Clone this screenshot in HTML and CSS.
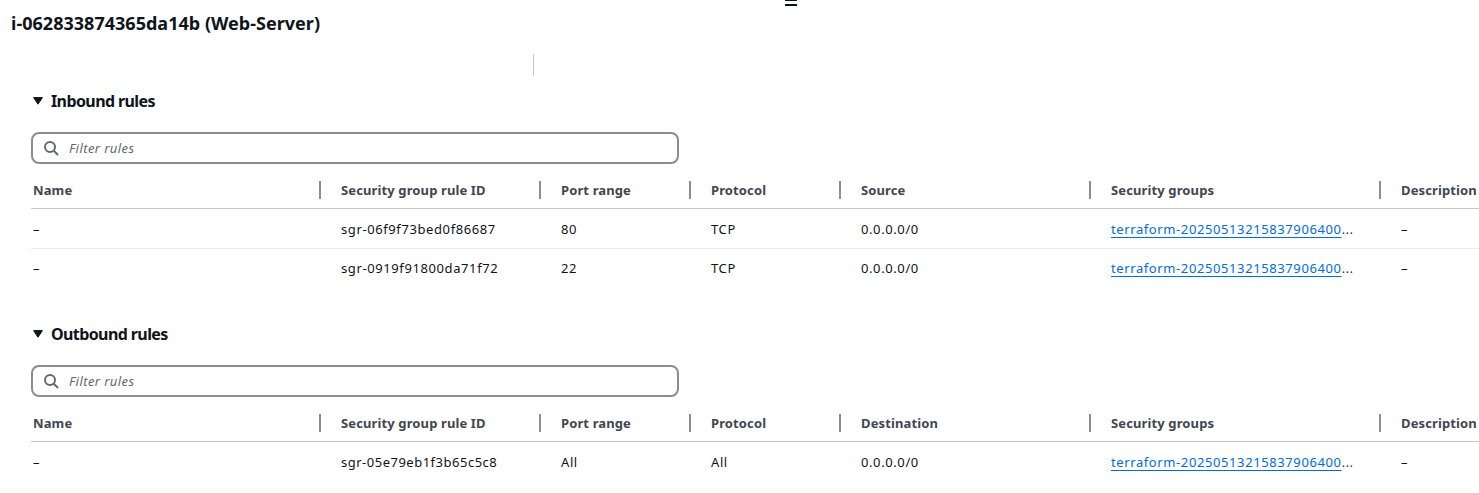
FILE: index.html
```html
<!DOCTYPE html>
<html lang="en">
<head>
<meta charset="utf-8">
<title>Instance details</title>
<link rel="stylesheet" href="styles.css">
</head>
<body>
<main class="panel">
  <div class="handle"></div>
  <h1 class="title">i-062833874365da14b (Web-Server)</h1>
  <div class="divider"></div>

  <section class="rules">
    <h2 class="heading"><svg class="caret" viewBox="0 0 10 8"><path d="M.6.6h8.8L5 7.2z"/></svg><span>Inbound rules</span></h2>
    <div class="filter"><svg class="search" viewBox="0 0 16 16"><circle cx="7" cy="7" r="5"/><path d="M10.8 10.8 15 15"/></svg><span class="placeholder">Filter rules</span></div>
    <div class="table">
      <div class="row head"><div class="cell">Name</div><div class="cell">Security group rule ID</div><div class="cell">Port range</div><div class="cell">Protocol</div><div class="cell">Source</div><div class="cell">Security groups</div><div class="cell">Description</div></div>
      <div class="row"><div class="cell">–</div><div class="cell">sgr-06f9f73bed0f86687</div><div class="cell">80</div><div class="cell">TCP</div><div class="cell">0.0.0.0/0</div><div class="cell"><a class="link">terraform-20250513215837906400</a><span class="more">…</span></div><div class="cell">–</div></div>
      <div class="row"><div class="cell">–</div><div class="cell">sgr-0919f91800da71f72</div><div class="cell">22</div><div class="cell">TCP</div><div class="cell">0.0.0.0/0</div><div class="cell"><a class="link">terraform-20250513215837906400</a><span class="more">…</span></div><div class="cell">–</div></div>
    </div>
  </section>

  <section class="rules">
    <h2 class="heading"><svg class="caret" viewBox="0 0 10 8"><path d="M.6.6h8.8L5 7.2z"/></svg><span>Outbound rules</span></h2>
    <div class="filter"><svg class="search" viewBox="0 0 16 16"><circle cx="7" cy="7" r="5"/><path d="M10.8 10.8 15 15"/></svg><span class="placeholder">Filter rules</span></div>
    <div class="table">
      <div class="row head"><div class="cell">Name</div><div class="cell">Security group rule ID</div><div class="cell">Port range</div><div class="cell">Protocol</div><div class="cell">Destination</div><div class="cell">Security groups</div><div class="cell">Description</div></div>
      <div class="row"><div class="cell">–</div><div class="cell tight">sgr-05e79eb1f3b65c5c8</div><div class="cell">All</div><div class="cell">All</div><div class="cell">0.0.0.0/0</div><div class="cell"><a class="link">terraform-20250513215837906400</a><span class="more">…</span></div><div class="cell">–</div></div>
    </div>
  </section>
</main>
</body>
</html>
```
FILE: styles.css
```css
* { box-sizing: border-box; }
body {
  margin: 0;
  background: #fff;
  color: #0f141a;
  font: 13px/20px "Noto Sans", "Open Sans", sans-serif;
}
.panel { display: flex; flex-direction: column; }
.handle {
  width: 12px;
  height: 6px;
  margin-left: 785px;
  border-top: 1px solid #0f141a;
  border-bottom: 2px solid #0f141a;
}
.title {
  margin: 6px 0 0 11px;
  font-size: 18px;
  line-height: 22px;
  font-weight: 700;
  letter-spacing: 0.02px;
}
.divider {
  width: 1px;
  height: 22px;
  margin: 20px 0 14px 533px;
  background: #c6c6cd;
}
.rules { padding-left: 31px; }
.rules + .rules { margin-top: 36px; }
.heading {
  display: flex;
  align-items: center;
  gap: 8px;
  height: 22px;
  margin: 0 0 20px;
  padding-left: 2px;
  font-size: 16px;
  line-height: 22px;
  font-weight: 700;
  letter-spacing: -0.6px;
}
.caret { width: 10px; height: 8px; fill: #0f141a; stroke: #0f141a; stroke-linejoin: round; }
.filter {
  display: flex;
  align-items: center;
  gap: 10px;
  width: 648px;
  height: 32px;
  padding-left: 10px;
  border: 2px solid #8c8c94;
  border-radius: 8px;
}
.search { width: 16px; height: 16px; fill: none; stroke: #656871; stroke-width: 2; }
.placeholder { color: #656871; font-style: italic; letter-spacing: 0.42px; }
.table { margin-top: 8px; }
.row {
  display: grid;
  grid-template-columns: 290px 220px 150px 150px 250px 290px 1fr;
  height: 39px;
  letter-spacing: 0.6px;
}
.row + .row + .row { border-top: 1px solid #ebebf0; }
.cell {
  display: flex;
  align-items: center;
  padding: 0 0 0 20px;
  white-space: nowrap;
}
.row:not(.head) .cell { padding-top: 1px; }
.row + .row + .row .cell { padding-top: 0; }
.cell:first-child { padding-left: 2px; }
.tight { letter-spacing: 0.5px; }
.head {
  height: 37px;
  border-bottom: 1px solid #c6c6cd;
  color: #424650;
  font-weight: 700;
  letter-spacing: 0.12px;
}
.head .cell { position: relative; }
.head .cell:not(:last-child)::after {
  content: "";
  position: absolute;
  right: 0;
  top: 9px;
  width: 2px;
  height: 18px;
  background: #8c8c94;
}
.link {
  color: #006ce0;
  text-decoration: underline;
  text-decoration-thickness: 1px;
  text-underline-offset: 3px;
}
.more { padding-bottom: 2px; font-size: 16px; font-weight: 300; }
```
